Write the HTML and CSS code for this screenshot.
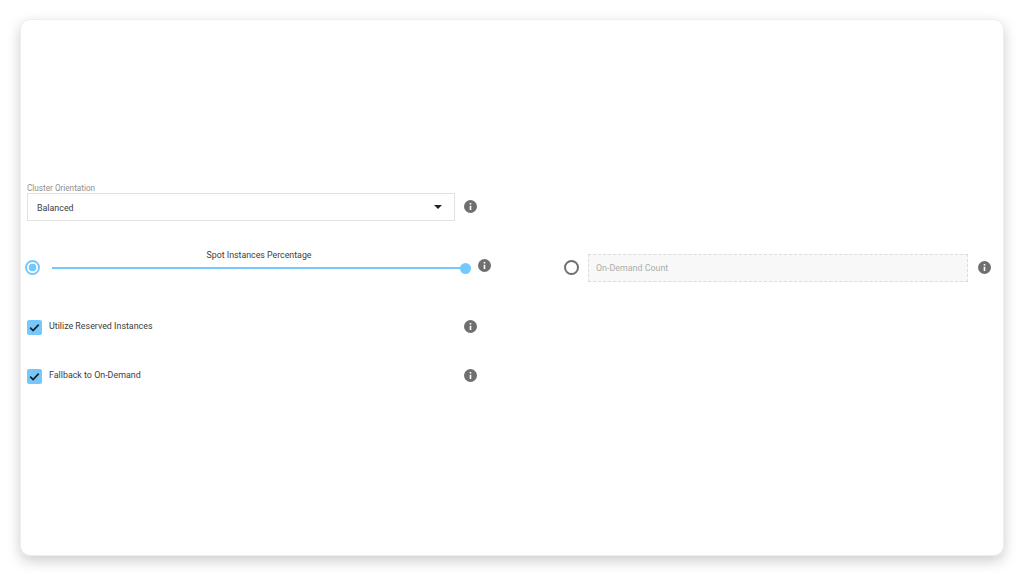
FILE: index.html
```html
<!DOCTYPE html>
<html lang="en">
<head>
<meta charset="utf-8">
<title>Cluster Orientation</title>
<link rel="stylesheet" href="styles.css">
</head>
<body>
<svg class="defs" width="0" height="0" aria-hidden="true">
  <symbol id="info" viewBox="0 0 13 13">
    <path fill="#6f6f6f" fill-rule="evenodd" d="M6.5 0a6.5 6.5 0 1 1 0 13a6.5 6.5 0 0 1 0-13zM5.7 2.9v1.6h1.6V2.9zM5.7 5.7v4.4h1.6V5.7z"/>
  </symbol>
  <symbol id="check" viewBox="0 0 15 15">
    <path fill="none" stroke="#1c1c1c" stroke-width="1.6" d="M3.2 7.6l2.9 3l5.6-6"/>
  </symbol>
</svg>
<main class="card">
  <section class="orientation">
    <div class="field-label">Cluster Orientation</div>
    <div class="select-row">
      <div class="select">
        <span class="select-value">Balanced</span>
        <span class="caret"></span>
      </div>
      <svg class="info"><use href="#info"/></svg>
    </div>
  </section>
  <section class="strategy">
    <div class="spot">
      <span class="radio radio-on"></span>
      <div class="slider">
        <div class="slider-title">Spot Instances Percentage</div>
        <div class="track"><span class="thumb"></span></div>
      </div>
      <svg class="info"><use href="#info"/></svg>
    </div>
    <div class="ondemand">
      <span class="radio"></span>
      <div class="count">On-Demand Count</div>
      <svg class="info"><use href="#info"/></svg>
    </div>
  </section>
  <section class="options">
    <div class="option">
      <span class="box"><svg class="check"><use href="#check"/></svg></span>
      <span class="option-text">Utilize Reserved Instances</span>
      <svg class="info"><use href="#info"/></svg>
    </div>
    <div class="option">
      <span class="box"><svg class="check"><use href="#check"/></svg></span>
      <span class="option-text">Fallback to On-Demand</span>
      <svg class="info"><use href="#info"/></svg>
    </div>
  </section>
</main>
</body>
</html>
```
FILE: styles.css
```css
html, body {
  margin: 0;
  height: 575px;
  overflow: hidden;
  background: #fff;
}
body {
  padding: 19px 20px 0;
  box-sizing: border-box;
  font-family: Roboto, "Liberation Sans", sans-serif;
  color: #3d3d3d;
}
.defs {
  display: block;
  height: 0;
}
.card {
  box-sizing: border-box;
  height: 537px;
  padding: 163px 0 0 6px;
  background: #fff;
  border: 1px solid #ededed;
  border-radius: 10px;
  box-shadow: 0 5px 14px rgba(0, 0, 0, 0.2);
}
.info {
  flex: none;
  width: 13px;
  height: 13px;
}
.field-label {
  height: 10px;
  font-size: 8.2px;
  line-height: 10px;
  color: #8f8f8f;
}
.select-row {
  display: flex;
  align-items: center;
  gap: 9px;
}
.select-row .info {
  margin-top: -2px;
}
.select {
  box-sizing: border-box;
  display: flex;
  align-items: center;
  justify-content: space-between;
  width: 428px;
  height: 28px;
  padding: 0 12.5px 0 9px;
  border: 1px solid #e2e2e2;
  font-size: 8.9px;
}
.select-value {
  margin-top: 2px;
}
.caret {
  border-style: solid;
  border-width: 4px 4.5px 0;
  border-color: #222 transparent transparent;
}
.strategy {
  display: flex;
  margin-top: 32px;
  height: 29px;
}
.spot {
  display: flex;
  align-items: center;
  width: 537px;
}
.radio {
  box-sizing: border-box;
  flex: none;
  width: 15px;
  height: 15px;
  border: 2px solid #6f6f6f;
  border-radius: 50%;
}
.radio-on {
  margin-left: -2px;
  border-color: #75c8fb;
  background: radial-gradient(circle, #75c8fb 0 3.6px, #fff 4.2px);
}
.slider {
  width: 414px;
  margin-left: 12px;
  margin-top: -16px;
}
.slider-title {
  height: 11px;
  font-size: 8.8px;
  line-height: 11px;
  text-align: center;
}
.track {
  position: relative;
  height: 1.5px;
  margin-top: 6px;
  background: #75c8fb;
}
.thumb {
  position: absolute;
  top: -4.5px;
  right: -5px;
  width: 11px;
  height: 11px;
  border-radius: 50%;
  background: #75c8fb;
}
.spot .info {
  margin-left: 12px;
  margin-top: -4px;
}
.ondemand {
  display: flex;
  align-items: center;
}
.count {
  box-sizing: border-box;
  width: 380px;
  height: 28px;
  margin-left: 9px;
  padding-left: 7px;
  border: 1px dashed #dcdcdc;
  background: #f8f8f8;
  font-size: 8.9px;
  line-height: 26px;
  color: #adadad;
}
.ondemand .info {
  margin-left: 10px;
}
.options {
  margin-top: 37px;
  display: flex;
  flex-direction: column;
  gap: 34px;
  width: 450px;
}
.option {
  display: flex;
  align-items: center;
  height: 15px;
}
.box {
  flex: none;
  width: 15px;
  height: 15px;
  margin-top: 2px;
  border-radius: 2px;
  background: #75c8fb;
}
.check {
  display: block;
  width: 15px;
  height: 15px;
}
.option-text {
  flex: 1;
  margin-left: 7px;
  margin-top: -1px;
  font-size: 8.9px;
}
```
